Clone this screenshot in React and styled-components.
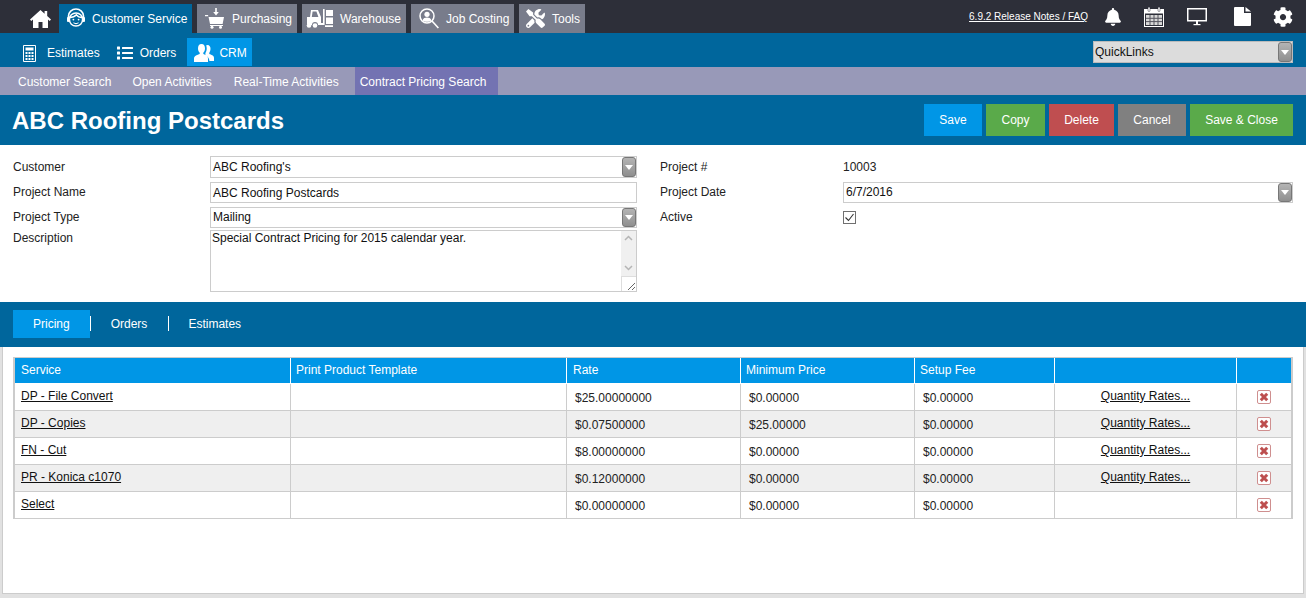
import React from "react";
import styled, { createGlobalStyle } from "styled-components";
import { FaBell, FaCog, FaList, FaTools } from "react-icons/fa";

const GlobalStyle = createGlobalStyle`
  html, body {
    margin: 0;
    padding: 0;
    background: #e1e1e1;
    font-family: "Liberation Sans", Arial, sans-serif;
    font-size: 12px;
    color: #222;
  }
  * { box-sizing: border-box; }
`;

const Page = styled.div`
  width: 1306px;
  height: 598px;
  overflow: hidden;
`;

/* top bar */
const TopBar = styled.div`
  display: flex;
  align-items: flex-end;
  height: 33px;
  padding-left: 30px;
  background: #2d2f39;
`;

const HomeLink = styled.a`
  display: flex;
  align-items: center;
  height: 29px;
  width: 29px;
  color: #fff;
`;

const MainTabs = styled.div`
  display: flex;
  gap: 5px;
`;

const MainTab = styled.a`
  display: flex;
  align-items: center;
  gap: ${(p) => p.$gap || 7}px;
  width: ${(p) => p.$width}px;
  height: 29px;
  padding-left: ${(p) => p.$pad}px;
  background: ${(p) => (p.$active ? "#00669c" : "#787c8b")};
  color: #fff;
  white-space: nowrap;
`;

const TopRight = styled.div`
  display: flex;
  align-items: center;
  height: 33px;
  margin-left: auto;
  padding-right: 13px;
`;

const ReleaseLink = styled.a`
  margin-right: 15px;
  color: #fff;
  font-size: 10px;
  text-decoration: underline;
`;

const TopIcon = styled.span`
  display: flex;
  justify-content: center;
  width: 20px;
  margin-right: ${(p) => p.$gap || 0}px;
  color: #fff;
`;

/* second row */
const ModuleBar = styled.div`
  display: flex;
  align-items: center;
  height: 34px;
  padding: 5px 13px 1px 23px;
  background: #00669c;
`;

const ModuleTab = styled.a`
  display: flex;
  align-items: center;
  gap: ${(p) => p.$gap}px;
  height: 28px;
  margin-right: ${(p) => p.$after}px;
  padding: ${(p) => (p.$active ? "2px 5px 0 7px" : "2px 0 0")};
  background: ${(p) => (p.$active ? "#0096e6" : "transparent")};
  color: #fff;
`;

const QuickLinks = styled.div`
  display: flex;
  align-items: center;
  justify-content: space-between;
  width: 200px;
  height: 22px;
  margin-left: auto;
  padding: 0 0 0 1px;
  background: #dcdcdc;
  border: 1px solid #bbb;
  color: #111;
`;

/* third row */
const SubNav = styled.div`
  display: flex;
  height: 28px;
  padding-left: 7px;
  background: #9899b8;
`;

const SubItem = styled.a`
  display: flex;
  align-items: center;
  margin-left: ${(p) => (p.$active ? 5 : 0)}px;
  padding: ${(p) => (p.$active ? "2px 12px 0 5px" : "2px 11px 0")};
  background: ${(p) => (p.$active ? "#7373b2" : "transparent")};
  color: #fff;
  &:first-child { padding-right: 10px; }
`;

/* title */
const TitleBar = styled.div`
  display: flex;
  align-items: center;
  justify-content: space-between;
  height: 50px;
  padding: 0 13px 0 12px;
  background: #00669c;
`;

const Title = styled.h1`
  margin: 0;
  padding-top: 2px;
  color: #fff;
  font-size: 24px;
  font-weight: bold;
`;

const Actions = styled.div`
  display: flex;
  gap: 4px;
`;

const Action = styled.button`
  width: ${(p) => p.$width}px;
  height: 32px;
  padding: 0;
  border: 0;
  background: ${(p) => p.$color};
  color: #fff;
  font: 12px "Liberation Sans", Arial, sans-serif;
`;

/* form */
const Form = styled.div`
  display: flex;
  height: 157px;
  padding: 11px 13px 0;
  background: #fff;
`;

const FormColumn = styled.div`
  display: flex;
  flex-direction: column;
  width: ${(p) => p.$width}px;
  margin-right: ${(p) => p.$after || 0}px;
`;

const FormRow = styled.div`
  display: flex;
  align-items: ${(p) => (p.$top ? "flex-start" : "center")};
  height: ${(p) => p.$height}px;
  margin-bottom: ${(p) => p.$after || 0}px;
`;

const Label = styled.label`
  flex: none;
  width: ${(p) => p.$width}px;
  padding-top: ${(p) => (p.$top ? 1 : 0)}px;
  padding-bottom: ${(p) => (p.$top || p.$level ? 0 : 2)}px;
  color: #222;
`;

const Field = styled.div`
  display: flex;
  flex: 1;
  align-items: center;
  justify-content: space-between;
  height: 100%;
  padding-left: 2px;
  border: 1px solid #ccc;
  background: #fff;
  color: #111;
`;

const FieldText = styled.span`
  margin-top: ${(p) => (p.$lift ? -2 : 0)}px;
`;

const ArrowButton = styled.span`
  display: flex;
  align-items: center;
  justify-content: center;
  flex: none;
  width: 14px;
  height: 100%;
  border: 1px solid #777;
  border-radius: 3px;
  background: linear-gradient(#b4b4b4, #8f8f8f);
  &::after {
    content: "";
    border-left: 4px solid transparent;
    border-right: 4px solid transparent;
    border-top: 5px solid #fff;
  }
`;

const TextArea = styled.div`
  display: flex;
  flex: 1;
  justify-content: space-between;
  height: 100%;
  padding-left: 1px;
  border: 1px solid #ccc;
  color: #111;
`;

const ScrollTrack = styled.div`
  display: flex;
  flex-direction: column;
  align-items: center;
  justify-content: space-between;
  width: 15px;
  background: #f0f0f0;
  color: #b5b5b5;
`;

const ScrollGrip = styled.div`
  display: flex;
  align-items: flex-end;
  justify-content: flex-end;
  width: 15px;
  height: 15px;
  background: #fff;
  border-top: 1px solid #ddd;
  border-left: 1px solid #ddd;
`;

const Value = styled.span`
  color: #222;
`;

const CheckBox = styled.span`
  display: flex;
  align-items: center;
  justify-content: center;
  width: 13px;
  height: 13px;
  border: 1px solid #707070;
  background: #fff;
`;

/* tabs */
const TabBar = styled.div`
  display: flex;
  height: 45px;
  padding: 8px 13px 9px;
  background: #00669c;
`;

const Tab = styled.a`
  position: relative;
  display: flex;
  align-items: center;
  padding: 0 ${(p) => (p.$active ? 20 : 21)}px;
  background: ${(p) => (p.$active ? "#0096e6" : "transparent")};
  color: #fff;
  &:last-child { padding-left: 20px; }
  &:not(:last-child)::after {
    content: "";
    position: absolute;
    top: 6px;
    right: -1px;
    width: 1px;
    height: 15px;
    background: #fff;
  }
`;

/* grid */
const Panel = styled.div`
  width: 1302px;
  height: 247px;
  margin-left: 2px;
  padding: 10px;
  border: 1px solid #ccc;
  border-top: 0;
  background: #fff;
`;

const TableFrame = styled.div`
  width: 1280px;
  border: 1px solid #ccc;
  border-left-width: 2px;
  border-right-width: 2px;
`;

const Table = styled.table`
  width: 1276px;
  table-layout: fixed;
  border-collapse: separate;
  border-spacing: 0;
`;

const Head = styled.th`
  height: 26px;
  padding: 0 0 2px ${(p) => p.$pad || 6}px;
  border-right: 1px solid #fff;
  border-bottom: 1px solid #fff;
  background: #0096e6;
  color: #fff;
  font-weight: normal;
  text-align: left;
  &:last-child { border-right: 0; }
`;

const Row = styled.tr`
  background: ${(p) => (p.$shaded ? "#efefef" : "#fff")};
  &:last-child td { height: 26px; border-bottom: 0; }
`;

const Cell = styled.td`
  height: 27px;
  padding: 1px 0 0 8px;
  border-right: 1px solid #ccc;
  border-bottom: 1px solid #ccc;
  color: #222;
  &:last-child { border-right: 0; }
`;

const LinkCell = styled(Cell)`
  padding: 0 0 3px 6px;
`;

const CenterCell = styled(Cell)`
  padding: 0;
  text-align: center;
`;

const TextLink = styled.a`
  color: #111;
  text-decoration: underline;
`;

const QuantityLink = styled(TextLink)`
  position: relative;
  top: -1px;
`;

const DeleteIcon = styled.svg`
  display: block;
  margin: 0 auto;
`;

const HomeIcon = () => (
  <svg width="21" height="18" viewBox="0 0 21 18" fill="#fff">
    <path d="M10.5 0 0 9.6l1.3 1.3L3 9.4V18h5.5v-6h4v6H18V9.4l1.7 1.5L21 9.6l-3.8-3.5V1h-2.6v2.7z" />
  </svg>
);

const HeadsetIcon = () => (
  <svg width="20" height="21" viewBox="0 0 20 21" fill="none" stroke="#fff">
    <path d="M2.5 10V8a7.5 7 0 0 1 15 0v2" strokeWidth="1.6" />
    <circle cx="10" cy="11.5" r="6.6" strokeWidth="1.5" />
    <path d="M3.6 9.5C7 9.5 9 8.5 10.5 6.8c1 1.6 3 2.7 6 2.7" strokeWidth="1.4" />
    <circle cx="7.4" cy="11.6" r=".9" fill="#fff" stroke="none" />
    <circle cx="12.6" cy="11.6" r=".9" fill="#fff" stroke="none" />
    <path d="M7.5 14.6c1.5 1.2 3.5 1.2 5 0" strokeWidth="1.1" />
    <rect x="1" y="9" width="2.4" height="5" rx="1" fill="#fff" stroke="none" />
    <rect x="16.6" y="9" width="2.4" height="5" rx="1" fill="#fff" stroke="none" />
  </svg>
);

const CartIcon = () => (
  <svg width="20" height="21" viewBox="0 0 20 21" fill="#fff">
    <path d="M10.2 0h1.6v4h2l-2.8 3.4L8.2 4h2z" />
    <path d="M0 7h3l.6 2H19l-1.4 7H5l-1.6-7.8H0z" />
    <path d="M5 17h13v1H5z" />
    <circle cx="7" cy="19.3" r="1.5" />
    <circle cx="15.5" cy="19.3" r="1.5" />
  </svg>
);

const ForkliftIcon = () => (
  <svg width="27" height="19" viewBox="0 0 27 19" fill="#fff">
    <path fillRule="evenodd" d="M5 1h7l3 7v6h2V0h1.6v16H12a3 3 0 0 0-6 0H4a3 3 0 0 0-3-1V8h3zm1.6 1.6L5.8 8h6.6l-2-5.4z" />
    <circle cx="3" cy="16.5" r="2.3" />
    <circle cx="9" cy="16.5" r="2.3" />
    <path d="M20 1h7v6h-7zM20 8.5h7V15h-7zM19 16.2h8V18h-8z" />
  </svg>
);

const SearchUserIcon = () => (
  <svg width="20" height="21" viewBox="0 0 20 21" fill="none" stroke="#fff">
    <circle cx="8" cy="8" r="7" strokeWidth="1.5" />
    <circle cx="8" cy="6.3" r="2.6" fill="#fff" stroke="none" />
    <path d="M3.4 12.4c1-2.4 2.6-3 4.6-3s3.6.6 4.6 3c-2.6 1.8-6.6 1.8-9.2 0z" fill="#fff" stroke="none" />
    <path d="m13 13 6.4 7" strokeWidth="1.6" />
  </svg>
);

const CalendarIcon = () => (
  <svg width="20" height="20" viewBox="0 0 20 20">
    <rect x=".5" y="2.5" width="19" height="17" fill="#2d2f39" stroke="#fff" />
    <path d="M1 3h18v3.5H1z" fill="#fff" />
    <rect x="4" y="0" width="2" height="4.5" rx="1" fill="#fff" stroke="#2d2f39" strokeWidth=".5" />
    <rect x="14" y="0" width="2" height="4.5" rx="1" fill="#fff" stroke="#2d2f39" strokeWidth=".5" />
    <path d="M2 8h16v10H2z" fill="#d8d8d8" />
    <path d="M6 8v10M10 8v10M14 8v10M2 11.3h16M2 14.6h16" stroke="#55565f" strokeWidth="1" />
  </svg>
);

const MonitorIcon = () => (
  <svg width="20" height="19" viewBox="0 0 20 19" fill="none">
    <rect x=".75" y="1.75" width="18.5" height="12" stroke="#fff" strokeWidth="1.5" />
    <path d="M9 14h2v3H9z" fill="#fff" />
    <path d="M6.5 17h7v1.2h-7z" fill="#fff" />
  </svg>
);

const FileIcon = () => (
  <svg width="17" height="19" viewBox="0 0 17 19" fill="#fff">
    <path d="M1 0h9v6h7v12a1 1 0 0 1-1 1H1a1 1 0 0 1-1-1V1a1 1 0 0 1 1-1z" />
    <path d="M11.5 0 17 4.6h-5.500z" />
  </svg>
);

const CalculatorIcon = () => (
  <svg width="13" height="17" viewBox="0 0 13 17" fill="#fff">
    <path fillRule="evenodd" d="M1 0h11a1 1 0 0 1 1 1v15a1 1 0 0 1-1 1H1a1 1 0 0 1-1-1V1a1 1 0 0 1 1-1zm0 1v15h11V1z" />
    <path d="M2.5 2.5h8v3h-8zM2.5 7h2v2h-2zM5.5 7h2v2h-2zM8.5 7h2v2h-2zM2.5 10h2v2h-2zM5.5 10h2v2h-2zM8.5 10h2v2h-2zM2.5 13h2v2h-2zM5.5 13h2v2h-2zM8.5 13h2v2h-2z" />
  </svg>
);

const PeopleIcon = () => (
  <svg width="20" height="18" viewBox="0 0 20 18" fill="#fff">
    <path d="M7.5 0C10 0 11 2 11 4.4c0 2-1 3.600-1.700 4.300v1.400c2 1 4.700 1.600 4.700 4.400V18H0v-3.500c0-2.800 3.700-3.400 5.700-4.400V8.700C5 8 4 6.400 4 4.400 4 2 5 0 7.500 0z" />
    <path d="M13.500 1c2 0 3 1.800 3 3.800 0 1.700-.6 3.200-1.200 3.900v1.300c1.800.8 4.700 1.300 4.700 4V17h-4.600c0-3-1.400-4.400-4-5.600V9c.9-1.200 1.400-3 1.300-4.800 0-1-.2-2-.6-2.700.4-.3.800-.5 1.400-.5z" />
  </svg>
);

const RemoveIcon = () => (
  <DeleteIcon width="14" height="14" viewBox="0 0 14 14">
    <rect x=".5" y=".5" width="13" height="13" rx="1.500" fill="#fff" stroke="#cf8f8f" />
    <path d="m3.800 3.800 6.400 6.400M10.200 3.800l-6.400 6.400" stroke="#bd4f4f" strokeWidth="3" />
  </DeleteIcon>
);

const services = [
  { name: "DP - File Convert", rate: "$25.00000000", min: "$0.00000", fee: "$0.00000", quantity: true },
  { name: "DP - Copies", rate: "$0.07500000", min: "$25.00000", fee: "$0.00000", quantity: true },
  { name: "FN - Cut", rate: "$8.00000000", min: "$0.00000", fee: "$0.00000", quantity: true },
  { name: "PR - Konica c1070", rate: "$0.12000000", min: "$0.00000", fee: "$0.00000", quantity: true },
  { name: "Select", rate: "$0.00000000", min: "$0.00000", fee: "$0.00000", quantity: false },
];

const App = () => (
  <Page>
    <GlobalStyle />
    <TopBar>
      <HomeLink><HomeIcon /></HomeLink>
      <MainTabs>
        <MainTab $active $width={133} $pad={7} $gap={6}><HeadsetIcon />Customer Service</MainTab>
        <MainTab $width={100} $pad={8}><CartIcon />Purchasing</MainTab>
        <MainTab $width={104} $pad={4}><ForkliftIcon />Warehouse</MainTab>
        <MainTab $width={103} $pad={8}><SearchUserIcon />Job Costing</MainTab>
        <MainTab $width={66} $pad={7}><FaTools size={19} />Tools</MainTab>
      </MainTabs>
      <TopRight>
        <ReleaseLink>6.9.2 Release Notes / FAQ</ReleaseLink>
        <TopIcon $gap={21}><FaBell size={18} /></TopIcon>
        <TopIcon $gap={23}><CalendarIcon /></TopIcon>
        <TopIcon $gap={25}><MonitorIcon /></TopIcon>
        <TopIcon $gap={21}><FileIcon /></TopIcon>
        <TopIcon><FaCog size={20} /></TopIcon>
      </TopRight>
    </TopBar>

    <ModuleBar>
      <ModuleTab $gap={11} $after={17}><CalculatorIcon />Estimates</ModuleTab>
      <ModuleTab $gap={7} $after={11}><FaList size={16} />Orders</ModuleTab>
      <ModuleTab $active $gap={5} $after={0}><PeopleIcon />CRM</ModuleTab>
      <QuickLinks>QuickLinks<ArrowButton /></QuickLinks>
    </ModuleBar>

    <SubNav>
      <SubItem>Customer Search</SubItem>
      <SubItem>Open Activities</SubItem>
      <SubItem>Real-Time Activities</SubItem>
      <SubItem $active>Contract Pricing Search</SubItem>
    </SubNav>

    <TitleBar>
      <Title>ABC Roofing Postcards</Title>
      <Actions>
        <Action $width={58} $color="#0096e6">Save</Action>
        <Action $width={59} $color="#5aaa4a">Copy</Action>
        <Action $width={65} $color="#bf4e50">Delete</Action>
        <Action $width={68} $color="#808080">Cancel</Action>
        <Action $width={103} $color="#5aaa4a">Save &amp; Close</Action>
      </Actions>
    </TitleBar>

    <Form>
      <FormColumn $width={624} $after={23}>
        <FormRow $height={22} $after={4}>
          <Label $level $width={197}>Customer</Label>
          <Field>ABC Roofing's<ArrowButton /></Field>
        </FormRow>
        <FormRow $height={21} $after={4}>
          <Label $width={197}>Project Name</Label>
          <Field>ABC Roofing Postcards</Field>
        </FormRow>
        <FormRow $height={21} $after={2}>
          <Label $width={197}>Project Type</Label>
          <Field><FieldText $lift>Mailing</FieldText><ArrowButton /></Field>
        </FormRow>
        <FormRow $top $height={62}>
          <Label $top $width={197}>Description</Label>
          <TextArea>
            Special Contract Pricing for 2015 calendar year.
            <ScrollTrack>
              <svg width="9" height="14" viewBox="0 0 9 14" fill="none" stroke="currentColor" strokeWidth="1.500">
                <path d="m1 9 3.500-3.500L8 9" />
              </svg>
              <svg width="9" height="30" viewBox="0 0 9 30" fill="none" stroke="currentColor" strokeWidth="1.500">
                <path d="m1 20 3.500 3.500L8 20" />
              </svg>
              <ScrollGrip>
                <svg width="11" height="11" viewBox="0 0 11 11" stroke="#666" fill="none">
                  <path d="m3 10 7-7M7 10l3-3" />
                </svg>
              </ScrollGrip>
            </ScrollTrack>
          </TextArea>
        </FormRow>
      </FormColumn>
      <FormColumn $width={633}>
        <FormRow $height={22} $after={4}>
          <Label $level $width={183}>Project #</Label>
          <Value>10003</Value>
        </FormRow>
        <FormRow $height={21} $after={4}>
          <Label $width={183}>Project Date</Label>
          <Field><FieldText $lift>6/7/2016</FieldText><ArrowButton /></Field>
        </FormRow>
        <FormRow $height={21}>
          <Label $width={183}>Active</Label>
          <CheckBox>
            <svg width="11" height="11" viewBox="0 0 11 11" fill="none" stroke="#333" strokeWidth="1.100">
              <path d="m1.500 5.500 3 3 5-6.500" />
            </svg>
          </CheckBox>
        </FormRow>
      </FormColumn>
    </Form>

    <TabBar>
      <Tab $active>Pricing</Tab>
      <Tab>Orders</Tab>
      <Tab>Estimates</Tab>
    </TabBar>

    <Panel>
      <TableFrame>
        <Table>
          <colgroup>
            <col style={{ width: 276 }} />
            <col style={{ width: 276 }} />
            <col style={{ width: 174 }} />
            <col style={{ width: 174 }} />
            <col style={{ width: 140 }} />
            <col style={{ width: 182 }} />
            <col style={{ width: 54 }} />
          </colgroup>
          <thead>
            <tr>
              <Head>Service</Head>
              <Head $pad={5}>Print Product Template</Head>
              <Head>Rate</Head>
              <Head $pad={5}>Minimum Price</Head>
              <Head $pad={5}>Setup Fee</Head>
              <Head />
              <Head />
            </tr>
          </thead>
          <tbody>
            {services.map((service, i) => (
              <Row key={service.name} $shaded={i % 2 === 1}>
                <LinkCell><TextLink>{service.name}</TextLink></LinkCell>
                <Cell />
                <Cell>{service.rate}</Cell>
                <Cell>{service.min}</Cell>
                <Cell>{service.fee}</Cell>
                <CenterCell>{service.quantity && <QuantityLink>Quantity Rates...</QuantityLink>}</CenterCell>
                <CenterCell><RemoveIcon /></CenterCell>
              </Row>
            ))}
          </tbody>
        </Table>
      </TableFrame>
    </Panel>
  </Page>
);

export default App;
